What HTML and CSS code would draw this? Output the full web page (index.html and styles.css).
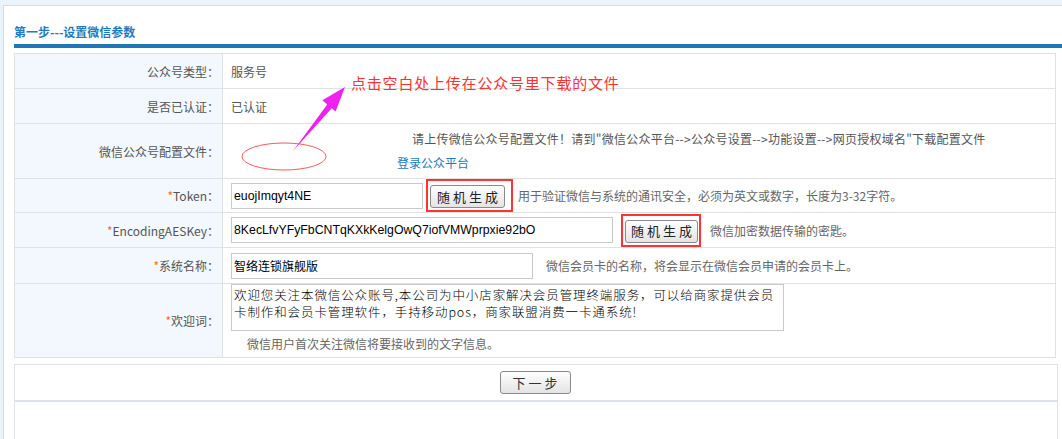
FILE: index.html
```html
<!DOCTYPE html>
<html lang="zh-CN">
<head>
<meta charset="utf-8">
<title>设置微信参数</title>
<link rel="stylesheet" href="styles.css">
</head>
<body>
<div class="page">
  <div class="panel">
    <div class="title">第一步---设置微信参数</div>
    <table class="form">
      <tr class="h35">
        <td class="lbl">公众号类型：</td>
        <td class="val">服务号</td>
      </tr>
      <tr class="h35">
        <td class="lbl">是否已认证：</td>
        <td class="val">已认证</td>
      </tr>
      <tr class="h55">
        <td class="lbl">微信公众号配置文件：</td>
        <td class="val">
          <div class="tip">请上传微信公众号配置文件！请到"微信公众平台--&gt;公众号设置--&gt;功能设置--&gt;网页授权域名"下载配置文件</div>
          <div class="login"><a class="link" href="#">登录公众平台</a></div>
        </td>
      </tr>
      <tr class="h34">
        <td class="lbl"><span class="req">*</span>Token：</td>
        <td class="val">
          <input class="txt w-token" type="text" value="euojImqyt4NE"><span class="mark mark-token"><button class="btn">随机生成</button></span><span class="hint hint-token">用于验证微信与系统的通讯安全，必须为英文或数字，长度为3-32字符。</span>
        </td>
      </tr>
      <tr class="h35">
        <td class="lbl"><span class="req">*</span>EncodingAESKey：</td>
        <td class="val">
          <input class="txt w-aes" type="text" value="8KecLfvYFyFbCNTqKXkKelgOwQ7iofVMWprpxie92bO"><span class="mark mark-aes"><button class="btn">随机生成</button></span><span class="hint hint-aes">微信加密数据传输的密匙。</span>
        </td>
      </tr>
      <tr class="h36">
        <td class="lbl"><span class="req">*</span>系统名称：</td>
        <td class="val">
          <input class="txt w-name" type="text" value="智络连锁旗舰版"><span class="hint hint-name">微信会员卡的名称，将会显示在微信会员申请的会员卡上。</span>
        </td>
      </tr>
      <tr class="h74">
        <td class="lbl"><span class="req">*</span>欢迎词：</td>
        <td class="val top">
          <textarea class="area">欢迎您关注本微信公众账号,本公司为中小店家解决会员管理终端服务，可以给商家提供会员卡制作和会员卡管理软件，手持移动pos，商家联盟消费一卡通系统!</textarea>
          <div class="hint hint-area">微信用户首次关注微信将要接收到的文字信息。</div>
        </td>
      </tr>
    </table>
    <div class="actions"><button class="btn next">下一步</button></div>
    <div class="footbox"></div>
  </div>

  <svg class="annot" width="1062" height="439" viewBox="0 0 1062 439" xmlns="http://www.w3.org/2000/svg">
    <ellipse cx="284" cy="156.5" rx="42" ry="13.5" fill="none" stroke="#f45a5a" stroke-width="1"/>
    <polygon points="345,87 335.6,111.5 331.8,108.3 293,151 327.2,104.5 322.4,100.3" fill="#f020f0"/>
  </svg>
  <div class="note">点击空白处上传在公众号里下载的文件</div>
</div>
</body>
</html>
```

FILE: styles.css
```css
html, body {
  margin: 0;
  padding: 0;
  overflow: hidden;
  background: #eaf4fb;
}

.page {
  position: relative;
  width: 1062px;
  height: 439px;
  overflow: hidden;
  font-family: "Noto Sans CJK SC", "Liberation Sans", sans-serif;
  font-size: 12px;
  color: #555;
}

.panel {
  margin: 5px 0 0 3px;
  padding: 0 0 0 10px;
  height: 480px;
  background: #fff;
  border-top: 1px solid #dcdcdc;
  border-left: 1px solid #dcdcdc;
}

.title {
  padding: 17px 0 3px 0;
  line-height: 18px;
  font-weight: bold;
  color: #1f7bbd;
  border-bottom: 4px solid #2176b5;
}

.form {
  margin-top: 5px;
  width: 1042px;
  border-collapse: collapse;
  border: 1px solid #e1e1e1;
}

.form td {
  border: 1px solid #e1e1e1;
  padding: 0;
}

.h35 { height: 35px; }
.h55 { height: 55px; }
.h34 { height: 34px; }
.h36 { height: 36px; }
.h74 { height: 74px; }

.lbl {
  width: 204px;
  background: #f2f8fe;
  text-align: right;
  padding-right: 3px !important;
  color: #555;
}

.val {
  padding-left: 8px !important;
  white-space: nowrap;
}

.val.top {
  vertical-align: top;
  padding-top: 0 !important;
}

.req {
  color: #ff6a1a;
}

.tip {
  padding-left: 181px;
  line-height: 24px;
  letter-spacing: 0.25px;
}

.login {
  padding-left: 166px;
  line-height: 24px;
}

.link {
  color: #1a7bbf;
  text-decoration: none;
}

.txt {
  box-sizing: border-box;
  height: 26px;
  border: 1px solid #c9c9c9;
  padding: 0 2px;
  font-family: "Liberation Sans", Arial, sans-serif;
  font-size: 12.3px;
  color: #000;
  vertical-align: middle;
  margin: 0;
}

.w-token { width: 192px; }
.w-aes { width: 382px; }
.w-name {
  width: 302px;
  font-family: "Noto Sans CJK SC", sans-serif;
  font-size: 12px;
}

.mark {
  display: inline-block;
  border: 2px solid #f33;
  vertical-align: middle;
  line-height: 0;
}

.mark-token {
  margin-left: 3px;
  padding: 4px 6px 2px 2px;
}

.mark-aes {
  margin-left: 8px;
  padding: 4px 1px 2px 2px;
}

.btn {
  box-sizing: border-box;
  height: 23px;
  padding: 0 3px 0 6px;
  border: 1px solid #8a8a8a;
  border-radius: 3px;
  background: linear-gradient(#fefefe, #e4e4e4);
  font-family: "Noto Sans CJK SC", sans-serif;
  font-size: 13px;
  letter-spacing: 3px;
  color: #222;
  line-height: 20px;
  margin: 0;
}

.mark-aes .btn {
  padding: 0 2px 0 5px;
}

.hint {
  color: #666;
  vertical-align: middle;
}

.hint-token { margin-left: 5px; }
.hint-aes { margin-left: 9px; }
.hint-name { margin-left: 13px; }

.area {
  display: block;
  box-sizing: border-box;
  width: 553px;
  height: 47px;
  margin: 0;
  padding: 1px 2px;
  border: 1px solid #c9c9c9;
  font-family: "Noto Sans CJK SC", sans-serif;
  font-size: 12.5px;
  font-weight: 300;
  line-height: 17px;
  letter-spacing: 0.9px;
  color: #000;
  resize: none;
  overflow: hidden;
  white-space: normal;
}

.hint-area {
  padding-left: 16px;
  line-height: 26px;
}

.actions {
  margin-top: 6px;
  width: 1042px;
  height: 35px;
  border: 1px solid #e2e2e2;
  border-bottom: 2px solid #dde3e8;
  display: flex;
  align-items: center;
  justify-content: center;
}

.next {
  width: 71px;
  height: 23px;
  padding: 0 0 0 3px;
  margin-left: -2px;
  color: #333;
}

.footbox {
  width: 1042px;
  height: 37px;
  border: 1px solid #e2e2e2;
  border-top: none;
}

.annot {
  position: absolute;
  left: 0;
  top: 0;
}

.note {
  position: absolute;
  left: 351px;
  top: 73px;
  font-size: 15px;
  letter-spacing: 0.8px;
  line-height: 20px;
  color: #ff3030;
  white-space: nowrap;
}
```
